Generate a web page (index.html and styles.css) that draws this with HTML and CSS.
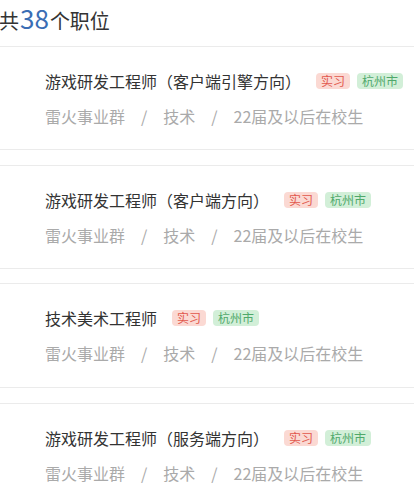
FILE: index.html
```html
<!DOCTYPE html>
<html lang="zh-CN">
<head>
<meta charset="utf-8">
<link rel="stylesheet" href="styles.css">
</head>
<body>
<div class="header">共<span class="count">38</span>个职位</div>
<div class="list">
  <div class="job">
    <div class="title-row"><span class="title">游戏研发工程师（客户端引擎方向）</span><span class="tag tag-red">实习</span><span class="tag tag-green">杭州市</span></div>
    <div class="meta">雷火事业群<span class="sep">/</span>技术<span class="sep">/</span>22届及以后在校生</div>
  </div>
  <div class="job">
    <div class="title-row"><span class="title">游戏研发工程师（客户端方向）</span><span class="tag tag-red">实习</span><span class="tag tag-green">杭州市</span></div>
    <div class="meta">雷火事业群<span class="sep">/</span>技术<span class="sep">/</span>22届及以后在校生</div>
  </div>
  <div class="job">
    <div class="title-row"><span class="title">技术美术工程师</span><span class="tag tag-red">实习</span><span class="tag tag-green">杭州市</span></div>
    <div class="meta">雷火事业群<span class="sep">/</span>技术<span class="sep">/</span>22届及以后在校生</div>
  </div>
  <div class="job">
    <div class="title-row"><span class="title">游戏研发工程师（服务端方向）</span><span class="tag tag-red">实习</span><span class="tag tag-green">杭州市</span></div>
    <div class="meta">雷火事业群<span class="sep">/</span>技术<span class="sep">/</span>22届及以后在校生</div>
  </div>
</div>
</body>
</html>
```
FILE: styles.css
```css
html, body {
  margin: 0;
  padding: 0;
  background: #ffffff;
}
body {
  font-family: "Noto Sans CJK SC", "Noto Sans", sans-serif;
  color: #333333;
  width: 414px;
  overflow: hidden;
}
.header {
  height: 46px;
  box-sizing: content-box;
  border-bottom: 1px solid #ebebeb;
  font-size: 20px;
  line-height: 36px;
  margin-left: -1px;
  color: #333333;
}
.count {
  font-size: 26px;
  color: #3a6db4;
  margin: 0 1px;
}
.job {
  height: 103px;
  box-sizing: border-box;
  padding: 22px 0 0 45px;
  border-bottom: 1px solid #ebebeb;
}
.job + .job {
  height: 104px;
  margin-top: 15px;
  border-top: 1px solid #ebebeb;
}
.job:nth-child(3) {
  height: 105px;
  margin-top: 14px;
}
.title-row {
  display: flex;
  align-items: center;
  height: 24px;
}
.title {
  font-size: 16px;
  line-height: 24px;
  color: #333333;
  margin-right: 15px;
  white-space: nowrap;
}
.tag {
  font-size: 12px;
  line-height: 16px;
  padding: 0 5px;
  border-radius: 4px;
  margin-right: 7px;
  white-space: nowrap;
}
.tag-red {
  background: #fbd9d3;
  color: #e2574c;
}
.tag-green {
  background: #d2efd8;
  color: #4fa86a;
}
.meta {
  margin-top: 11px;
  font-size: 16px;
  line-height: 24px;
  color: #aaaaaa;
  white-space: nowrap;
}
.sep {
  margin: 0 16px;
}
```
